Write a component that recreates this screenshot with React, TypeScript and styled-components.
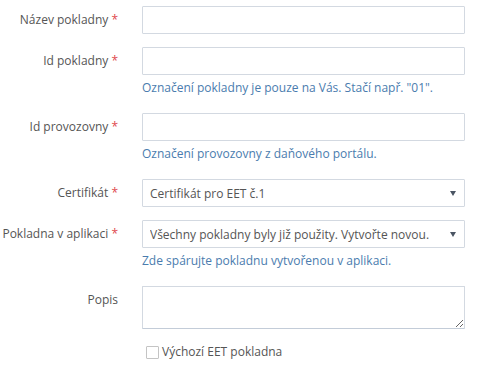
import React from 'react';
import styled, { createGlobalStyle } from 'styled-components';

const GlobalStyle = createGlobalStyle`
  body {
    margin: 0;
    background: #ffffff;
    font-family: 'Open Sans', 'Noto Sans', sans-serif;
    font-size: 12px;
    color: #555555;
  }
`;

const fields = [
  { id: 'name', label: 'Název pokladny', kind: 'input' },
  { id: 'cashId', label: 'Id pokladny', kind: 'input', help: 'Označení pokladny je pouze na Vás. Stačí např. "01".' },
  { id: 'shopId', label: 'Id provozovny', kind: 'input', help: 'Označení provozovny z daňového portálu.' },
  { id: 'cert', label: 'Certifikát', kind: 'select', value: 'Certifikát pro EET č.1' },
  {
    id: 'app',
    label: 'Pokladna v aplikaci',
    kind: 'select',
    value: 'Všechny pokladny byly již použity. Vytvořte novou.',
    help: 'Zde spárujte pokladnu vytvořenou v aplikaci.',
  },
];

const App = () => {
  return (
    <>
      <GlobalStyle />
      <Form>
        {fields.map(({ id, label, kind, value, help }) => (
          <Group key={id}>
            <Label htmlFor={id}>
              {label} <Req>*</Req>
            </Label>
            <Control>
              {kind === 'input' ? (
                <Input id={id} type="text" />
              ) : (
                <SelectWrap>
                  <Select id={id} defaultValue={value}>
                    <option>{value}</option>
                  </Select>
                  <Caret width="6" height="5" viewBox="0 0 6 5">
                    <path d="M0 0h6L3 5z" fill="#4a5563" />
                  </Caret>
                </SelectWrap>
              )}
              {help && <Help>{help}</Help>}
            </Control>
          </Group>
        ))}
        <Group>
          <Label htmlFor="desc">Popis</Label>
          <Control>
            <TextArea id="desc" />
          </Control>
        </Group>
        <Group>
          <span />
          <CheckRow>
            <Check type="checkbox" />
            Výchozí EET pokladna
          </CheckRow>
        </Group>
      </Form>
    </>
  );
};

const Form = styled.form`
  width: 465px;
  padding-top: 6px;
  display: flex;
  flex-direction: column;
  gap: 13px;
`;

const Group = styled.div`
  display: grid;
  grid-template-columns: 118px 323px;
  column-gap: 24px;
  align-items: start;
`;

const Label = styled.label`
  text-align: right;
  white-space: nowrap;
  line-height: 18px;
  padding-top: 5px;
  color: #555555;
`;

const Req = styled.span`
  color: #e0484d;
`;

const Control = styled.div`
  display: flex;
  flex-direction: column;
`;

const fieldBase = `
  box-sizing: border-box;
  width: 100%;
  border: 1px solid #d3d9e1;
  border-radius: 1px;
  background: #ffffff;
  font-family: 'Open Sans', 'Noto Sans', sans-serif;
  font-size: 12px;
  color: #555555;
  outline: none;
`;

const Input = styled.input`
  ${fieldBase}
  height: 28px;
  padding: 0 8px;
`;

const SelectWrap = styled.div`
  position: relative;
`;

const Select = styled.select`
  ${fieldBase}
  height: 28px;
  padding: 0 24px 0 7px;
  appearance: none;
`;

const Caret = styled.svg`
  position: absolute;
  right: 9px;
  top: 12px;
  pointer-events: none;
`;

const TextArea = styled.textarea`
  ${fieldBase}
  height: 43px;
  padding: 6px 8px;
  border-bottom-color: #c3ccd8;
  resize: vertical;
  display: block;
`;

const Help = styled.p`
  margin: 4px 0 3px;
  line-height: 18px;
  color: #4a7cae;
`;

const CheckRow = styled.label`
  display: flex;
  align-items: center;
  gap: 3px;
  line-height: 18px;
  padding-left: 4px;
  margin-top: 1px;
  color: #555555;
`;

const Check = styled.input`
  appearance: none;
  width: 13px;
  height: 13px;
  margin: 0;
  border: 1px solid #c4c4c4;
  border-radius: 1px;
  background: #ffffff;
`;

export default App;
